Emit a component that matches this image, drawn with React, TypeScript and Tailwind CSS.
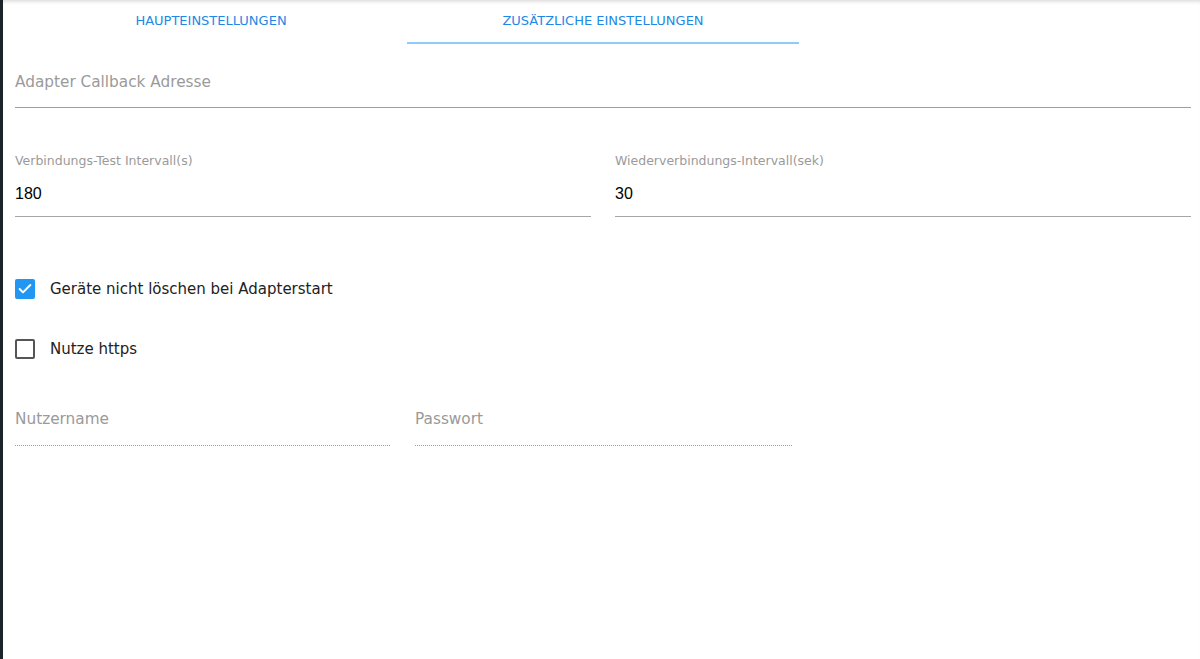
import { Check } from "lucide-react";

const schrift = { fontFamily: '"DejaVu Sans", "Liberation Sans", sans-serif' };

function Feld({ label, wert, breite }: { label: string; wert: string; breite: string }) {
  return (
    <div className={`flex flex-col ${breite}`}>
      <span className="text-[12.5px] leading-none text-[#9a9a9a]">{label}</span>
      <span
        className="mt-[18px] text-[16px] leading-none text-black"
        style={{ fontFamily: '"Liberation Sans", sans-serif' }}
      >
        {wert}
      </span>
      <div className="mt-[14px] h-px bg-[#a6a6a6]" />
    </div>
  );
}

function Kontrollkasten({ aktiv, text }: { aktiv: boolean; text: string }) {
  return (
    <div className="flex h-5 items-center gap-[15px]">
      {aktiv ? (
        <span className="flex h-[20px] w-[20px] items-center justify-center rounded-[2px] bg-[#2196f3]">
          <Check className="h-4 w-4 text-white" strokeWidth={3} />
        </span>
      ) : (
        <span className="h-[20px] w-[20px] rounded-[2px] border-2 border-[#555]" />
      )}
      <span className="text-[15px] text-[#222]">{text}</span>
    </div>
  );
}

export default function App() {
  return (
    <div className="flex h-[659px] w-full bg-white" style={schrift}>
      <div className="w-[3px] shrink-0 bg-[#1b242a]" />
      <div className="flex flex-1 flex-col bg-white pl-3 pr-[9px] shadow-[inset_0_4px_4px_-3px_rgba(0,0,0,0.18)]">
        {/* Tabs */}
        <div className="flex">
          <div className="flex h-[44px] w-[392px] items-start justify-center pt-[11px] text-[13px] uppercase text-[#1e88e5]">
            Haupteinstellungen
          </div>
          <div className="flex h-[44px] w-[392px] flex-col items-center pt-[11px] text-[13px] text-[#1e88e5]">
            <span>ZUSÄTZLICHE EINSTELLUNGEN</span>
            <div className="mt-auto h-[2px] w-full bg-[#90caf9]" />
          </div>
        </div>

        <div className="mt-[31px] flex flex-col">
          <span className="text-[15.3px] leading-none text-[#9a9a9a]">Adapter Callback Adresse</span>
          <div className="mt-[17px] h-px bg-[#9e9e9e]" />
        </div>

        <div className="mt-[47px] flex gap-6">
          <Feld label="Verbindungs-Test Intervall(s)" wert="180" breite="flex-1" />
          <Feld label="Wiederverbindungs-Intervall(sek)" wert="30" breite="flex-1" />
        </div>

        <div className="mt-[62px] flex flex-col gap-10">
          <Kontrollkasten aktiv text="Geräte nicht löschen bei Adapterstart" />
          <Kontrollkasten aktiv={false} text="Nutze https" />
        </div>

        <div className="mt-[53px] flex gap-[25px]">
          <div className="flex w-[375px] flex-col">
            <span className="text-[15.3px] leading-none text-[#9a9a9a]">Nutzername</span>
            <div className="mt-[18px] border-b border-dotted border-[#9e9e9e]" />
          </div>
          <div className="flex w-[377px] flex-col">
            <span className="text-[15.3px] leading-none text-[#9a9a9a]">Passwort</span>
            <div className="mt-[18px] border-b border-dotted border-[#9e9e9e]" />
          </div>
        </div>
      </div>
    </div>
  );
}
